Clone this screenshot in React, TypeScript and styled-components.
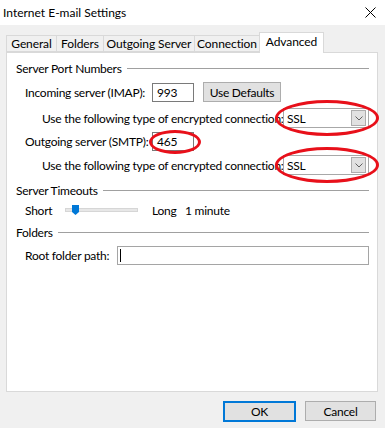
import React from 'react';
import styled, { createGlobalStyle } from 'styled-components';

const GlobalStyle = createGlobalStyle`
  body {
    margin: 0;
    font-family: Lato, "Liberation Sans", sans-serif;
    font-size: 12px;
    letter-spacing: -0.25px;
    color: #000;
  }
`;

const Window = styled.div`
  width: 385px;
  height: 428px;
  background: #f0f0f0;
  display: flex;
  flex-direction: column;
  overflow: hidden;
`;

const TitleBar = styled.div`
  height: 25px;
  background: #ffffff;
  display: flex;
  align-items: center;
  justify-content: space-between;
  padding: 0 9px 0 3px;
  font-size: 12px;
  letter-spacing: 0;
`;

const TabStrip = styled.div`
  height: 27px;
  display: flex;
  align-items: flex-end;
  padding-left: 6px;
  position: relative;
  z-index: 1;
  white-space: nowrap;
  letter-spacing: -0.1px;
`;

const Tab = styled.div<{ $w: number; $active?: boolean }>`
  width: ${(p) => p.$w}px;
  height: ${(p) => (p.$active ? 21 : 17)}px;
  margin-left: -1px;
  margin-bottom: ${(p) => (p.$active ? -1 : 0)}px;
  box-sizing: border-box;
  border: 1px solid #d9d9d9;
  border-bottom: ${(p) => (p.$active ? 'none' : '1px solid #d9d9d9')};
  background: ${(p) => (p.$active ? '#ffffff' : '#f0f0f0')};
  display: flex;
  align-items: center;
  justify-content: center;
  padding-bottom: ${(p) => (p.$active ? 3 : 0)}px;
  &:first-child {
    margin-left: 0;
  }
`;

const Panel = styled.div`
  width: 372px;
  height: 340px;
  margin-left: 6px;
  box-sizing: border-box;
  background: #ffffff;
  border: 1px solid #d9d9d9;
  padding: 0 8px 0 9px;
  display: flex;
  flex-direction: column;
`;

const GroupHeader = styled.div<{ $mt: number }>`
  margin-top: ${(p) => p.$mt}px;
  height: 16px;
  display: flex;
  align-items: center;
  gap: 5px;
  white-space: nowrap;
  &::after {
    content: '';
    flex: 1;
    height: 1px;
    background: #a0a0a0;
  }
`;

const Row = styled.div<{ $mt: number; $indent: number }>`
  margin-top: ${(p) => p.$mt}px;
  height: 20px;
  display: flex;
  align-items: center;
  padding-left: ${(p) => p.$indent}px;
`;

const Label = styled.span<{ $w?: number }>`
  width: ${(p) => (p.$w ? `${p.$w}px` : 'auto')};
  flex-shrink: 0;
  white-space: nowrap;
`;

const TextBox = styled.div<{ $w: number }>`
  position: relative;
  width: ${(p) => p.$w}px;
  height: 19px;
  box-sizing: border-box;
  border: 1px solid #7a7a7a;
  background: #ffffff;
  display: flex;
  align-items: center;
  padding-left: 4px;
`;

const WideBox = styled(TextBox)`
  border-color: #a5a5a5;
  padding-left: 2px;
`;

const Caret = styled.span`
  width: 1px;
  height: 13px;
  background: #000;
`;

const Button = styled.button<{ $w: number; $default?: boolean }>`
  width: ${(p) => p.$w}px;
  height: ${(p) => (p.$default ? 21 : 20)}px;
  box-sizing: border-box;
  background: #e1e1e1;
  border: ${(p) => (p.$default ? '2px solid #0078d7' : '1px solid #adadad')};
  font-family: inherit;
  font-size: 12px;
  letter-spacing: inherit;
  color: #000;
  padding: 0;
  display: flex;
  align-items: center;
  justify-content: center;
`;

const Spacer = styled.span<{ $w: number }>`
  width: ${(p) => p.$w}px;
  flex-shrink: 0;
`;

const Combo = styled.div`
  position: relative;
  width: 86px;
  height: 20px;
  box-sizing: border-box;
  border: 1px solid #a8a8a8;
  background: #ffffff;
  display: flex;
  align-items: center;
  padding-left: 3px;
`;

const ComboButton = styled.span`
  position: absolute;
  right: 2px;
  top: 1px;
  width: 15px;
  height: 16px;
  box-sizing: border-box;
  background: #e1e1e1;
  border: 1px solid #adadad;
  display: flex;
  align-items: center;
  justify-content: center;
`;

const Highlight = styled.span<{ $l: number; $t: number; $r: number; $b: number }>`
  position: absolute;
  left: ${(p) => p.$l}px;
  top: ${(p) => p.$t}px;
  right: ${(p) => p.$r}px;
  bottom: ${(p) => p.$b}px;
  border: 3px solid #e8101a;
  border-radius: 50%;
  pointer-events: none;
`;

const SliderArea = styled.div`
  width: 87px;
  height: 20px;
  display: flex;
  align-items: center;
`;

const Track = styled.div`
  position: relative;
  width: 73px;
  height: 4px;
  box-sizing: border-box;
  background: #e7e7e7;
  border: 1px solid #d6d6d6;
`;

const Thumb = styled.svg`
  position: absolute;
  left: 6px;
  top: -4px;
`;

const Footer = styled.div`
  display: flex;
  justify-content: flex-end;
  gap: 9px;
  padding: 9px 9px 0 0;
`;

const ChevronDown = () => (
  <svg width="8" height="5" viewBox="0 0 8 5">
    <path d="M0.5 0.5 L4 4 L7.5 0.5" fill="none" stroke="#606060" strokeWidth="1" />
  </svg>
);

const CloseIcon = () => (
  <svg width="11" height="11" viewBox="0 0 11 11">
    <path d="M0.5 0.5 L10.5 10.5 M10.5 0.5 L0.5 10.5" stroke="#000" strokeWidth="1" />
  </svg>
);

const tabs = [
  { name: 'General', w: 51 },
  { name: 'Folders', w: 48 },
  { name: 'Outgoing Server', w: 92 },
  { name: 'Connection', w: 66 },
  { name: 'Advanced', w: 65, active: true },
];

const EncryptionRow = ({ mt }: { mt: number }) => (
  <Row $mt={mt} $indent={26}>
    <Label $w={241}>Use the following type of encrypted connection:</Label>
    <Combo>
      SSL
      <ComboButton>
        <ChevronDown />
      </ComboButton>
      <Highlight $l={-9} $t={-9} $r={-11} $b={-9} />
    </Combo>
  </Row>
);

export default function App() {
  return (
    <>
      <GlobalStyle />
      <Window>
        <TitleBar>
          <span>Internet E-mail Settings</span>
          <CloseIcon />
        </TitleBar>
        <TabStrip>
          {tabs.map((t) => (
            <Tab key={t.name} $w={t.w} $active={t.active}>
              {t.name}
            </Tab>
          ))}
        </TabStrip>
        <Panel>
          <GroupHeader $mt={7}>Server Port Numbers</GroupHeader>
          <Row $mt={6} $indent={9}>
            <Label $w={127}>Incoming server (IMAP):</Label>
            <TextBox $w={42}>993</TextBox>
            <Spacer $w={9} />
            <Button $w={78}>Use Defaults</Button>
          </Row>
          <EncryptionRow mt={6} />
          <Row $mt={3} $indent={9}>
            <Label $w={127}>Outgoing server (SMTP):</Label>
            <TextBox $w={42}>
              465
              <Highlight $l={-4} $t={-3} $r={-8} $b={-4} />
            </TextBox>
          </Row>
          <EncryptionRow mt={4} />
          <GroupHeader $mt={7}>Server Timeouts</GroupHeader>
          <Row $mt={2} $indent={9}>
            <Label $w={40}>Short</Label>
            <SliderArea>
              <Track>
                <Thumb width="7" height="10" viewBox="0 0 7 10">
                  <path d="M0 0 H7 V7 L3.5 10 L0 7 Z" fill="#0078d7" />
                </Thumb>
              </Track>
            </SliderArea>
            <Label $w={33}>Long</Label>
            <Label>1 minute</Label>
          </Row>
          <GroupHeader $mt={4}>Folders</GroupHeader>
          <Row $mt={5} $indent={9}>
            <Label $w={92}>Root folder path:</Label>
            <WideBox $w={253}>
              <Caret />
            </WideBox>
          </Row>
        </Panel>
        <Footer>
          <Button $w={73} $default>
            OK
          </Button>
          <Button $w={71}>Cancel</Button>
        </Footer>
      </Window>
    </>
  );
}
